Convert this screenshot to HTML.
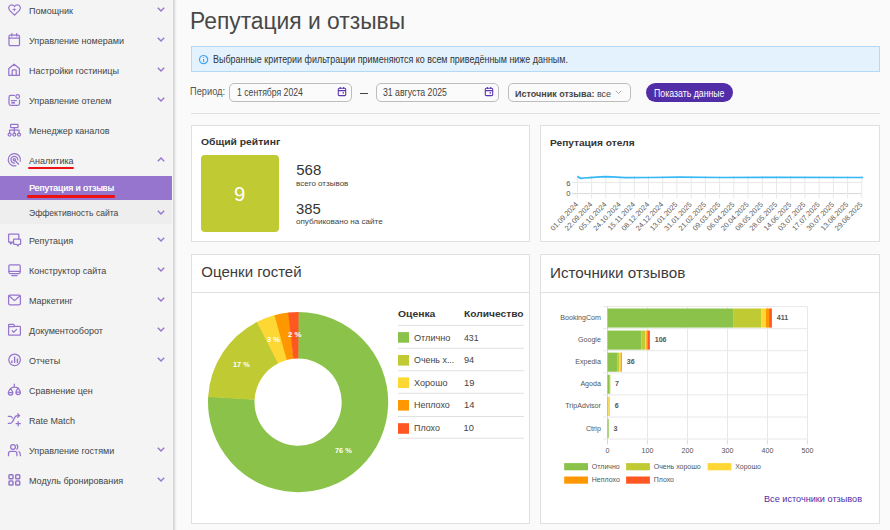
<!DOCTYPE html>
<html><head><meta charset="utf-8">
<style>
*{box-sizing:border-box;margin:0;padding:0}
html,body{width:890px;height:530px;overflow:hidden;background:#fafafa;font-family:"Liberation Sans",sans-serif;color:#333}
.abs{position:absolute}
#side{position:absolute;left:0;top:0;width:173px;height:530px;background:#f4f4f4}
#sideshadow{position:absolute;left:172px;top:0;width:5px;height:530px;background:linear-gradient(to right,#f7f7f7 0,#f7f7f7 1px,#cacaca 1px,#dedede 2.2px,#ececec 3.2px,#fafafa 5px)}
.mi{position:absolute;left:0;width:173px;height:30px;font-size:9px;color:#444}
.mi .t{position:absolute;left:29px;top:9px;line-height:12px;white-space:nowrap}
.mi svg.ic{position:absolute;left:0;top:0;width:24px;height:30px}
.mi svg.ch{position:absolute;left:157px;top:11.2px;width:8px;height:5px}
.sub{position:absolute;left:0;width:173px;height:24px;font-size:9px;color:#444}
.sub svg.ch{position:absolute;left:157px;top:9.5px;width:8px;height:5px}
.sub .t{position:absolute;left:29px;top:6px;line-height:12px;white-space:nowrap}
.card{position:absolute;background:#fff;border:1px solid #e0e0e0}
.tx{position:absolute;white-space:nowrap;line-height:1;transform-origin:0 0}
</style></head><body>
<div id="side">
<div class="mi" style="top:-4px"><svg class="ic" viewBox="0 0 24 30"><path fill="none" stroke="#9575cd" stroke-width="1.25" stroke-linecap="round" stroke-linejoin="round" d="M14.55 19.1 L9.9 14.6 C8.2 12.9 8.4 10.2 10.3 9.3 C11.8 8.6 13.4 9.1 14.55 10.4 C15.7 9.1 17.3 8.6 18.8 9.3 C20.7 10.2 20.9 12.9 19.2 14.6 Z"/><path fill="#9575cd" d="M14.1 11.3 L14.8 12.9 L16.7 13.6 L14.8 14.3 L14.5 16 L13.8 14.3 L11.9 13.6 L13.8 12.9 Z"/></svg><span class="t">Помощник</span><svg class="ch" viewBox="0 0 8 5"><path d="M0.8 0.8 L4 4 L7.2 0.8" fill="none" stroke="#9575cd" stroke-width="1.4"/></svg></div>
<div class="mi" style="top:26px"><svg class="ic" viewBox="0 0 24 30"><rect fill="none" stroke="#9575cd" stroke-width="1.25" stroke-linecap="round" stroke-linejoin="round" x="9" y="9.2" width="10.5" height="10.5" rx="1.3"/><path fill="none" stroke="#9575cd" stroke-width="1.25" stroke-linecap="round" stroke-linejoin="round" d="M9 12.2 H19.5 M11.8 7.6 V10 M16.7 7.6 V10"/></svg><span class="t">Управление номерами</span><svg class="ch" viewBox="0 0 8 5"><path d="M0.8 0.8 L4 4 L7.2 0.8" fill="none" stroke="#9575cd" stroke-width="1.4"/></svg></div>
<div class="mi" style="top:56px"><svg class="ic" viewBox="0 0 24 30"><path fill="none" stroke="#9575cd" stroke-width="1.25" stroke-linecap="round" stroke-linejoin="round" d="M8.8 19.3 V12.6 L14.1 8.2 L19.4 12.6 V19.3 Z"/><path fill="none" stroke="#9575cd" stroke-width="1.25" stroke-linecap="round" stroke-linejoin="round" d="M12.2 19.3 V14.6 Q12.2 13.8 13 13.8 H15.4 Q16.2 13.8 16.2 14.6 V19.3"/></svg><span class="t">Настройки гостиницы</span><svg class="ch" viewBox="0 0 8 5"><path d="M0.8 0.8 L4 4 L7.2 0.8" fill="none" stroke="#9575cd" stroke-width="1.4"/></svg></div>
<div class="mi" style="top:86px"><svg class="ic" viewBox="0 0 24 30"><path fill="none" stroke="#9575cd" stroke-width="1.25" stroke-linecap="round" stroke-linejoin="round" d="M14.4 9.4 H10.8 Q9 9.4 9 11.2 V17.6 Q9 19.4 10.8 19.4 H17.7 Q19.5 19.4 19.5 17.6 V14"/><circle fill="none" stroke="#9575cd" stroke-width="1.25" stroke-linecap="round" stroke-linejoin="round" cx="17.7" cy="10.5" r="1.8"/><path fill="none" stroke="#9575cd" stroke-width="1.25" stroke-linecap="round" stroke-linejoin="round" d="M11.3 14.5 H16.4"/><path fill="none" stroke="#9575cd" stroke-width="1.7" d="M11.3 16.8 H15"/></svg><span class="t">Управление отелем</span><svg class="ch" viewBox="0 0 8 5"><path d="M0.8 0.8 L4 4 L7.2 0.8" fill="none" stroke="#9575cd" stroke-width="1.4"/></svg></div>
<div class="mi" style="top:116px"><svg class="ic" viewBox="0 0 24 30"><rect fill="none" stroke="#9575cd" stroke-width="1.25" stroke-linecap="round" stroke-linejoin="round" x="10.6" y="8.3" width="7.4" height="3.3" rx="0.6"/><path fill="none" stroke="#9575cd" stroke-width="1.25" stroke-linecap="round" stroke-linejoin="round" d="M14.3 11.6 V14.2 M9.6 16.8 V14.2 H19 V16.8 M14.3 14.2 V16.8"/><circle fill="none" stroke="#9575cd" stroke-width="1.25" stroke-linecap="round" stroke-linejoin="round" cx="9.6" cy="18.5" r="1.5"/><circle fill="none" stroke="#9575cd" stroke-width="1.25" stroke-linecap="round" stroke-linejoin="round" cx="14.3" cy="18.5" r="1.5"/><circle fill="none" stroke="#9575cd" stroke-width="1.25" stroke-linecap="round" stroke-linejoin="round" cx="19" cy="18.5" r="1.5"/></svg><span class="t">Менеджер каналов</span></div>
<div class="mi" style="top:146px"><svg class="ic" viewBox="0 0 24 30"><path fill="none" stroke="#9575cd" stroke-width="1.25" stroke-linecap="round" stroke-linejoin="round" d="M15.9 19.6 A6.1 6.1 0 1 1 20.2 15.3"/><path fill="none" stroke="#9575cd" stroke-width="1.25" stroke-linecap="round" stroke-linejoin="round" d="M14.6 17.1 A3.4 3.4 0 1 1 17.7 13.9"/><circle fill="none" stroke="#9575cd" stroke-width="1.25" stroke-linecap="round" stroke-linejoin="round" cx="14.3" cy="13.7" r="1.1"/><path fill="none" stroke="#9575cd" stroke-width="1.25" stroke-linecap="round" stroke-linejoin="round" d="M15.3 14.8 L18.6 18.2"/></svg><span class="t">Аналитика</span><svg class="ch" viewBox="0 0 8 5"><path d="M0.8 4.2 L4 1 L7.2 4.2" fill="none" stroke="#9575cd" stroke-width="1.4"/></svg></div>
<div class="abs" style="left:27.5px;top:166.8px;width:46.5px;height:2.4px;background:#ee1111;border-radius:1.2px"></div>
<div class="sub" style="top:176px;background:#9575cd;color:#fafafa;"><span class="t" style="text-shadow:0.25px 0 0 #fafafa">Репутация и отзывы</span></div>
<div class="abs" style="left:27.2px;top:195.1px;width:87.7px;height:2.6px;background:#ee1111;border-radius:1.3px"></div>
<div class="sub" style="top:200px;background:#eeeeee;"><span class="t" style="font-size:8.6px;top:7px">Эффективность сайта</span><svg class="ch" viewBox="0 0 8 5"><path d="M0.8 0.8 L4 4 L7.2 0.8" fill="none" stroke="#9575cd" stroke-width="1.4"/></svg></div>
<div class="mi" style="top:226px"><svg class="ic" viewBox="0 0 24 30"><path fill="none" stroke="#9575cd" stroke-width="1.25" stroke-linecap="round" stroke-linejoin="round" d="M12.8 16.2 H9.2 Q8.6 16.2 8.6 15.6 V8.8 Q8.6 8.2 9.2 8.2 H18.2 Q18.8 8.2 18.8 8.8 V12.8 M9.8 16.2 L10.6 18 L12.4 16.2"/><path fill="none" stroke="#9575cd" stroke-width="1.25" stroke-linecap="round" stroke-linejoin="round" d="M14.2 13.2 H20 Q20.6 13.2 20.6 13.8 V17.8 Q20.6 18.4 20 18.4 H18.6 L18 20 L16.6 18.4 H14.2 Q13.6 18.4 13.6 17.8 V13.8 Q13.6 13.2 14.2 13.2 Z"/></svg><span class="t">Репутация</span><svg class="ch" viewBox="0 0 8 5"><path d="M0.8 0.8 L4 4 L7.2 0.8" fill="none" stroke="#9575cd" stroke-width="1.4"/></svg></div>
<div class="mi" style="top:256px"><svg class="ic" viewBox="0 0 24 30"><rect fill="none" stroke="#9575cd" stroke-width="1.25" stroke-linecap="round" stroke-linejoin="round" x="8.9" y="8.9" width="11.3" height="8.6" rx="1.2"/><path fill="none" stroke="#9575cd" stroke-width="1.25" stroke-linecap="round" stroke-linejoin="round" d="M9 15.4 H20.1 M11.8 19.5 H17"/></svg><span class="t">Конструктор сайта</span><svg class="ch" viewBox="0 0 8 5"><path d="M0.8 0.8 L4 4 L7.2 0.8" fill="none" stroke="#9575cd" stroke-width="1.4"/></svg></div>
<div class="mi" style="top:286px"><svg class="ic" viewBox="0 0 24 30"><rect fill="none" stroke="#9575cd" stroke-width="1.25" stroke-linecap="round" stroke-linejoin="round" x="8.6" y="9.2" width="11.8" height="9.6" rx="1.2"/><path fill="none" stroke="#9575cd" stroke-width="1.25" stroke-linecap="round" stroke-linejoin="round" d="M9 9.8 L14.5 14.6 L20 9.8"/></svg><span class="t">Маркетинг</span><svg class="ch" viewBox="0 0 8 5"><path d="M0.8 0.8 L4 4 L7.2 0.8" fill="none" stroke="#9575cd" stroke-width="1.4"/></svg></div>
<div class="mi" style="top:316px"><svg class="ic" viewBox="0 0 24 30"><path fill="none" stroke="#9575cd" stroke-width="1.25" stroke-linecap="round" stroke-linejoin="round" d="M8.6 18.4 V9 Q8.6 8.4 9.2 8.4 H13.6 L14.6 10.3 H19.8 Q20.4 10.3 20.4 10.9 V18.4 Q20.4 19 19.8 19 H9.2 Q8.6 19 8.6 18.4 Z M8.6 10.6 H14.3"/><path fill="none" stroke="#9575cd" stroke-width="1.25" stroke-linecap="round" stroke-linejoin="round" d="M12.2 14.8 L13.7 16.2 L16.6 13.4"/></svg><span class="t">Документооборот</span><svg class="ch" viewBox="0 0 8 5"><path d="M0.8 0.8 L4 4 L7.2 0.8" fill="none" stroke="#9575cd" stroke-width="1.4"/></svg></div>
<div class="mi" style="top:346px"><svg class="ic" viewBox="0 0 24 30"><circle fill="none" stroke="#9575cd" stroke-width="1.25" stroke-linecap="round" stroke-linejoin="round" cx="14.6" cy="13.8" r="5.8"/><path fill="none" stroke="#9575cd" stroke-width="1.4" d="M11.8 14.4 V17 M14.6 10.4 V17 M17.4 12.6 V17"/></svg><span class="t">Отчеты</span><svg class="ch" viewBox="0 0 8 5"><path d="M0.8 0.8 L4 4 L7.2 0.8" fill="none" stroke="#9575cd" stroke-width="1.4"/></svg></div>
<div class="mi" style="top:376px"><svg class="ic" viewBox="0 0 24 30"><path fill="none" stroke="#9575cd" stroke-width="1.25" stroke-linecap="round" stroke-linejoin="round" d="M14.3 8.2 V11 M10.5 12.5 Q14.3 10.2 18.1 12"/><path fill="none" stroke="#9575cd" stroke-width="1.25" stroke-linecap="round" stroke-linejoin="round" d="M10.5 12.6 C9.6 14 8.3 15.2 8.3 16.8 A2.25 2.25 0 0 0 12.8 16.8 C12.8 15.2 11.4 14 10.5 12.6 Z M8.6 16.6 H12.4"/><path fill="none" stroke="#9575cd" stroke-width="1.25" stroke-linecap="round" stroke-linejoin="round" d="M18.1 12.1 C17.2 13.5 15.9 14.7 15.9 16.3 A2.25 2.25 0 0 0 20.4 16.3 C20.4 14.7 19 13.5 18.1 12.1 Z M16.2 16.1 H20"/></svg><span class="t">Сравнение цен</span></div>
<div class="mi" style="top:406px"><svg class="ic" viewBox="0 0 24 30"><path fill="none" stroke="#9575cd" stroke-width="1.25" stroke-linecap="round" stroke-linejoin="round" d="M8.3 10.4 H10.3 Q11.6 10.4 12.4 12"/><path fill="none" stroke="#9575cd" stroke-width="1.25" stroke-linecap="round" stroke-linejoin="round" d="M8.3 17.3 H10.4 Q11.8 17.3 12.6 15.6 L14.6 11.6 Q15.6 9.6 17.6 9.6 H19.4 M17.6 7.8 L19.6 9.6 L17.6 11.4"/><path fill="none" stroke="#9575cd" stroke-width="1.25" stroke-linecap="round" stroke-linejoin="round" d="M18.2 15.6 V19.8 M16.1 17.7 H20.3"/></svg><span class="t">Rate Match</span></div>
<div class="mi" style="top:436px"><svg class="ic" viewBox="0 0 24 30"><circle fill="none" stroke="#9575cd" stroke-width="1.25" stroke-linecap="round" stroke-linejoin="round" cx="13" cy="10.9" r="2.4"/><path fill="none" stroke="#9575cd" stroke-width="1.25" stroke-linecap="round" stroke-linejoin="round" d="M8.5 19.7 V17.4 Q8.5 15.3 10.6 15.3 H14.8 Q16.9 15.3 16.9 17.4 V19.7"/><path fill="none" stroke="#9575cd" stroke-width="1.25" stroke-linecap="round" stroke-linejoin="round" d="M16.9 8.6 Q18.7 10.9 16.9 13.3 M19 15.4 Q20.4 16.4 20.4 19.7"/></svg><span class="t">Управление гостями</span><svg class="ch" viewBox="0 0 8 5"><path d="M0.8 0.8 L4 4 L7.2 0.8" fill="none" stroke="#9575cd" stroke-width="1.4"/></svg></div>
<div class="mi" style="top:466px"><svg class="ic" viewBox="0 0 24 30"><rect fill="none" stroke="#9575cd" stroke-width="1.5" x="9" y="8.7" width="4" height="4" rx="0.8"/><rect fill="none" stroke="#9575cd" stroke-width="1.5" x="15.7" y="8.7" width="4" height="4" rx="0.8"/><rect fill="none" stroke="#9575cd" stroke-width="1.5" x="9" y="15.1" width="4" height="4" rx="0.8"/><rect fill="none" stroke="#9575cd" stroke-width="1.5" x="15.7" y="15.1" width="4" height="4" rx="0.8"/></svg><span class="t">Модуль бронирования</span><svg class="ch" viewBox="0 0 8 5"><path d="M0.8 0.8 L4 4 L7.2 0.8" fill="none" stroke="#9575cd" stroke-width="1.4"/></svg></div>
</div>
<div id="sideshadow"></div>
<div class="abs" style="left:191px;top:46px;width:689px;height:26px;background:#e3f2fd;border:1px solid #b3d9f5"></div>
<svg class="abs" style="left:198px;top:54px;width:12px;height:12px" viewBox="0 0 12 12"><circle cx="5.6" cy="5.6" r="4.1" fill="none" stroke="#42a5f5" stroke-width="1.2"/><path d="M5.6 4.9 V8" stroke="#42a5f5" stroke-width="1.1"/><circle cx="5.6" cy="3.5" r="0.6" fill="#42a5f5"/></svg>
<div class="abs" style="left:229px;top:83px;width:123px;height:19px;border:1px solid #bdbdbd;border-radius:5px;background:#fbfbfb"></div>
<svg class="abs" style="left:337px;top:86px;width:10px;height:11px" viewBox="0 0 10 11" fill="none" stroke="#5e35b1" stroke-width="1.1"><rect x="1.3" y="2.2" width="7.4" height="7.4" rx="1.1"/><path d="M1.3 4.6 H8.7 M3.3 1 V3 M6.7 1 V3"/><rect x="5.6" y="6.2" width="1.4" height="1.4" fill="#5e35b1" stroke="none"/></svg>
<div class="abs" style="left:360px;top:92.5px;width:8px;height:1px;background:#444"></div>
<div class="abs" style="left:376px;top:83px;width:123px;height:19px;border:1px solid #bdbdbd;border-radius:5px;background:#fbfbfb"></div>
<svg class="abs" style="left:484px;top:86px;width:10px;height:11px" viewBox="0 0 10 11" fill="none" stroke="#5e35b1" stroke-width="1.1"><rect x="1.3" y="2.2" width="7.4" height="7.4" rx="1.1"/><path d="M1.3 4.6 H8.7 M3.3 1 V3 M6.7 1 V3"/><rect x="5.6" y="6.2" width="1.4" height="1.4" fill="#5e35b1" stroke="none"/></svg>
<div class="abs" style="left:508px;top:83px;width:123px;height:19px;border:1px solid #bdbdbd;border-radius:5px;background:#fbfbfb"></div>
<svg class="abs" style="left:615px;top:90px;width:7px;height:5px" viewBox="0 0 7 5"><path d="M0.8 0.8 L3.5 3.5 L6.2 0.8" fill="none" stroke="#9e9e9e" stroke-width="0.9"/></svg>
<div class="abs" style="left:646px;top:83px;width:87px;height:19px;background:#512da8;border-radius:10px"></div>
<div class="abs" style="left:191px;top:113px;width:689px;height:1px;background:#e0e0e0"></div>
<div class="card" style="left:191px;top:125px;width:339px;height:117px"></div>
<div class="abs" style="left:201px;top:155px;width:78px;height:77px;background:#c0ca33;border-radius:4px"></div>
<div class="card" style="left:540px;top:125px;width:340px;height:117px"></div>
<svg class="abs" style="left:540px;top:150px;width:340px;height:90px" viewBox="540 150 340 90"><line x1="572" y1="182.6" x2="861.8" y2="182.6" stroke="#e8e8e8" stroke-width="1"/><line x1="572" y1="193.6" x2="861.8" y2="193.6" stroke="#d8d8d8" stroke-width="1"/><line x1="577.4" y1="176" x2="577.4" y2="198.5" stroke="#e8e8e8" stroke-width="1"/><text x="578.6" y="204.8" transform="rotate(-46.5 578.6 204.8)" text-anchor="end" font-size="7.3" fill="#606060" font-family="Liberation Sans">01.09.2024</text><line x1="591.6" y1="176" x2="591.6" y2="198.5" stroke="#e8e8e8" stroke-width="1"/><text x="592.8" y="204.8" transform="rotate(-46.5 592.8 204.8)" text-anchor="end" font-size="7.3" fill="#606060" font-family="Liberation Sans">22.09.2024</text><line x1="605.8" y1="176" x2="605.8" y2="198.5" stroke="#e8e8e8" stroke-width="1"/><text x="607.0" y="204.8" transform="rotate(-46.5 607.0 204.8)" text-anchor="end" font-size="7.3" fill="#606060" font-family="Liberation Sans">05.10.2024</text><line x1="620.1" y1="176" x2="620.1" y2="198.5" stroke="#e8e8e8" stroke-width="1"/><text x="621.3" y="204.8" transform="rotate(-46.5 621.3 204.8)" text-anchor="end" font-size="7.3" fill="#606060" font-family="Liberation Sans">24.10.2024</text><line x1="634.3" y1="176" x2="634.3" y2="198.5" stroke="#e8e8e8" stroke-width="1"/><text x="635.5" y="204.8" transform="rotate(-46.5 635.5 204.8)" text-anchor="end" font-size="7.3" fill="#606060" font-family="Liberation Sans">15.11.2024</text><line x1="648.5" y1="176" x2="648.5" y2="198.5" stroke="#e8e8e8" stroke-width="1"/><text x="649.7" y="204.8" transform="rotate(-46.5 649.7 204.8)" text-anchor="end" font-size="7.3" fill="#606060" font-family="Liberation Sans">08.12.2024</text><line x1="662.7" y1="176" x2="662.7" y2="198.5" stroke="#e8e8e8" stroke-width="1"/><text x="663.9" y="204.8" transform="rotate(-46.5 663.9 204.8)" text-anchor="end" font-size="7.3" fill="#606060" font-family="Liberation Sans">24.12.2024</text><line x1="676.9" y1="176" x2="676.9" y2="198.5" stroke="#e8e8e8" stroke-width="1"/><text x="678.1" y="204.8" transform="rotate(-46.5 678.1 204.8)" text-anchor="end" font-size="7.3" fill="#606060" font-family="Liberation Sans">13.01.2025</text><line x1="691.2" y1="176" x2="691.2" y2="198.5" stroke="#e8e8e8" stroke-width="1"/><text x="692.4" y="204.8" transform="rotate(-46.5 692.4 204.8)" text-anchor="end" font-size="7.3" fill="#606060" font-family="Liberation Sans">31.01.2025</text><line x1="705.4" y1="176" x2="705.4" y2="198.5" stroke="#e8e8e8" stroke-width="1"/><text x="706.6" y="204.8" transform="rotate(-46.5 706.6 204.8)" text-anchor="end" font-size="7.3" fill="#606060" font-family="Liberation Sans">21.02.2025</text><line x1="719.6" y1="176" x2="719.6" y2="198.5" stroke="#e8e8e8" stroke-width="1"/><text x="720.8" y="204.8" transform="rotate(-46.5 720.8 204.8)" text-anchor="end" font-size="7.3" fill="#606060" font-family="Liberation Sans">09.03.2025</text><line x1="733.8" y1="176" x2="733.8" y2="198.5" stroke="#e8e8e8" stroke-width="1"/><text x="735.0" y="204.8" transform="rotate(-46.5 735.0 204.8)" text-anchor="end" font-size="7.3" fill="#606060" font-family="Liberation Sans">06.04.2025</text><line x1="748.0" y1="176" x2="748.0" y2="198.5" stroke="#e8e8e8" stroke-width="1"/><text x="749.2" y="204.8" transform="rotate(-46.5 749.2 204.8)" text-anchor="end" font-size="7.3" fill="#606060" font-family="Liberation Sans">20.04.2025</text><line x1="762.3" y1="176" x2="762.3" y2="198.5" stroke="#e8e8e8" stroke-width="1"/><text x="763.5" y="204.8" transform="rotate(-46.5 763.5 204.8)" text-anchor="end" font-size="7.3" fill="#606060" font-family="Liberation Sans">08.05.2025</text><line x1="776.5" y1="176" x2="776.5" y2="198.5" stroke="#e8e8e8" stroke-width="1"/><text x="777.7" y="204.8" transform="rotate(-46.5 777.7 204.8)" text-anchor="end" font-size="7.3" fill="#606060" font-family="Liberation Sans">28.05.2025</text><line x1="790.7" y1="176" x2="790.7" y2="198.5" stroke="#e8e8e8" stroke-width="1"/><text x="791.9" y="204.8" transform="rotate(-46.5 791.9 204.8)" text-anchor="end" font-size="7.3" fill="#606060" font-family="Liberation Sans">14.06.2025</text><line x1="804.9" y1="176" x2="804.9" y2="198.5" stroke="#e8e8e8" stroke-width="1"/><text x="806.1" y="204.8" transform="rotate(-46.5 806.1 204.8)" text-anchor="end" font-size="7.3" fill="#606060" font-family="Liberation Sans">03.07.2025</text><line x1="819.1" y1="176" x2="819.1" y2="198.5" stroke="#e8e8e8" stroke-width="1"/><text x="820.3" y="204.8" transform="rotate(-46.5 820.3 204.8)" text-anchor="end" font-size="7.3" fill="#606060" font-family="Liberation Sans">17.07.2025</text><line x1="833.4" y1="176" x2="833.4" y2="198.5" stroke="#e8e8e8" stroke-width="1"/><text x="834.6" y="204.8" transform="rotate(-46.5 834.6 204.8)" text-anchor="end" font-size="7.3" fill="#606060" font-family="Liberation Sans">30.07.2025</text><line x1="847.6" y1="176" x2="847.6" y2="198.5" stroke="#e8e8e8" stroke-width="1"/><text x="848.8" y="204.8" transform="rotate(-46.5 848.8 204.8)" text-anchor="end" font-size="7.3" fill="#606060" font-family="Liberation Sans">13.08.2025</text><line x1="861.8" y1="176" x2="861.8" y2="198.5" stroke="#e8e8e8" stroke-width="1"/><text x="863.0" y="204.8" transform="rotate(-46.5 863.0 204.8)" text-anchor="end" font-size="7.3" fill="#606060" font-family="Liberation Sans">29.08.2025</text><text x="570.4" y="185.5" text-anchor="end" font-size="7.6" fill="#4a4a4a" font-family="Liberation Sans">6</text><text x="570.4" y="196" text-anchor="end" font-size="7.6" fill="#4a4a4a" font-family="Liberation Sans">0</text><path d="M577.5 176.0 L579.0 177.6 L581.0 178.4 L584.0 178.0 L590.0 177.6 L600.0 176.9 L606.0 176.6 L612.0 176.9 L625.0 177.7 L650.0 177.5 L680.0 177.2 L720.0 177.5 L780.0 177.4 L863.2 177.5" fill="none" stroke="#35b8f5" stroke-width="1.7" stroke-linejoin="round"/></svg>
<div class="card" style="left:191px;top:254px;width:339px;height:270px"></div>
<div class="abs" style="left:192px;top:292px;width:337px;height:1px;background:#e0e0e0"></div>
<svg class="abs" style="left:192px;top:293px;width:336px;height:230px" viewBox="192 293 336 230"><path d="M298.10 312.00 A90.1 90.1 0 1 1 208.17 396.58 L254.58 399.43 A43.6 43.6 0 1 0 298.10 358.50 Z" fill="#8bc34a"/><path d="M208.14 397.12 A90.1 90.1 0 0 1 257.32 321.76 L278.37 363.22 A43.6 43.6 0 0 0 254.57 399.69 Z" fill="#c0ca33"/><path d="M256.84 322.00 A90.1 90.1 0 0 1 274.98 315.02 L286.91 359.96 A43.6 43.6 0 0 0 278.13 363.34 Z" fill="#fdd835"/><path d="M274.46 315.16 A90.1 90.1 0 0 1 288.69 312.49 L293.55 358.74 A43.6 43.6 0 0 0 286.66 360.03 Z" fill="#ff9800"/><path d="M288.15 312.55 A90.1 90.1 0 0 1 298.64 312.00 L298.36 358.50 A43.6 43.6 0 0 0 293.29 358.77 Z" fill="#ff5722"/><line x1="398" y1="325.4" x2="523.7" y2="325.4" stroke="#e0e0e0" stroke-width="1"/><line x1="398" y1="348.3" x2="523.7" y2="348.3" stroke="#e0e0e0" stroke-width="1"/><line x1="398" y1="370.75" x2="523.7" y2="370.75" stroke="#e0e0e0" stroke-width="1"/><line x1="398" y1="393.3" x2="523.7" y2="393.3" stroke="#e0e0e0" stroke-width="1"/><line x1="398" y1="416.5" x2="523.7" y2="416.5" stroke="#e0e0e0" stroke-width="1"/><line x1="398" y1="438.2" x2="523.7" y2="438.2" stroke="#e0e0e0" stroke-width="1"/><rect x="398" y="332.1" width="11" height="10.6" fill="#8bc34a"/><rect x="398" y="355.0" width="11" height="10.6" fill="#c0ca33"/><rect x="398" y="377.4" width="11" height="10.6" fill="#fdd835"/><rect x="398" y="400.0" width="11" height="10.6" fill="#ff9800"/><rect x="398" y="423.2" width="11" height="10.6" fill="#ff5722"/></svg>
<div class="card" style="left:540px;top:254px;width:340px;height:270px"></div>
<div class="abs" style="left:541px;top:292px;width:338px;height:1px;background:#e0e0e0"></div>
<svg class="abs" style="left:541px;top:293px;width:338px;height:230px" viewBox="541 293 338 230"><line x1="647.5" y1="306.6" x2="647.5" y2="440" stroke="#e8e8e8" stroke-width="1"/><line x1="687.5" y1="306.6" x2="687.5" y2="440" stroke="#e8e8e8" stroke-width="1"/><line x1="727.5" y1="306.6" x2="727.5" y2="440" stroke="#e8e8e8" stroke-width="1"/><line x1="767.5" y1="306.6" x2="767.5" y2="440" stroke="#e8e8e8" stroke-width="1"/><line x1="807.5" y1="306.6" x2="807.5" y2="440" stroke="#e8e8e8" stroke-width="1"/><line x1="603.0" y1="306.6" x2="807.5" y2="306.6" stroke="#e8e8e8" stroke-width="1"/><line x1="603.0" y1="328.7" x2="807.5" y2="328.7" stroke="#e8e8e8" stroke-width="1"/><line x1="603.0" y1="350.7" x2="807.5" y2="350.7" stroke="#e8e8e8" stroke-width="1"/><line x1="603.0" y1="372.8" x2="807.5" y2="372.8" stroke="#e8e8e8" stroke-width="1"/><line x1="603.0" y1="394.9" x2="807.5" y2="394.9" stroke="#e8e8e8" stroke-width="1"/><line x1="603.0" y1="417.0" x2="807.5" y2="417.0" stroke="#e8e8e8" stroke-width="1"/><line x1="603.0" y1="439.0" x2="807.5" y2="439.0" stroke="#e8e8e8" stroke-width="1"/><line x1="607.5" y1="306.6" x2="607.5" y2="444.5" stroke="#d8d8d8" stroke-width="1"/><line x1="647.5" y1="440" x2="647.5" y2="444.5" stroke="#e0e0e0" stroke-width="1"/><line x1="687.5" y1="440" x2="687.5" y2="444.5" stroke="#e0e0e0" stroke-width="1"/><line x1="727.5" y1="440" x2="727.5" y2="444.5" stroke="#e0e0e0" stroke-width="1"/><line x1="767.5" y1="440" x2="767.5" y2="444.5" stroke="#e0e0e0" stroke-width="1"/><line x1="807.5" y1="440" x2="807.5" y2="444.5" stroke="#e0e0e0" stroke-width="1"/><rect x="607.50" y="308.50" width="125.60" height="19.07" fill="#8bc34a"/><rect x="733.10" y="308.50" width="28.40" height="19.07" fill="#c0ca33"/><rect x="761.50" y="308.50" width="4.40" height="19.07" fill="#fdd835"/><rect x="765.90" y="308.50" width="3.20" height="19.07" fill="#ff9800"/><rect x="769.10" y="308.50" width="2.80" height="19.07" fill="#ff5722"/><text x="600.9" y="320.1" text-anchor="end" font-size="7.1" fill="#555" font-family="Liberation Sans">BookingCom</text><text x="776.7" y="320.1" font-size="7.1" font-weight="bold" fill="#555" font-family="Liberation Sans">411</text><rect x="607.50" y="330.57" width="34.00" height="19.07" fill="#8bc34a"/><rect x="641.50" y="330.57" width="3.60" height="19.07" fill="#c0ca33"/><rect x="645.10" y="330.57" width="1.20" height="19.07" fill="#fdd835"/><rect x="646.30" y="330.57" width="1.20" height="19.07" fill="#ff9800"/><rect x="647.50" y="330.57" width="2.40" height="19.07" fill="#ff5722"/><text x="600.9" y="342.2" text-anchor="end" font-size="7.1" fill="#555" font-family="Liberation Sans">Google</text><text x="654.7" y="342.2" font-size="7.1" font-weight="bold" fill="#555" font-family="Liberation Sans">106</text><rect x="607.50" y="352.64" width="9.60" height="19.07" fill="#8bc34a"/><rect x="617.10" y="352.64" width="2.00" height="19.07" fill="#c0ca33"/><rect x="619.10" y="352.64" width="1.60" height="19.07" fill="#fdd835"/><rect x="620.70" y="352.64" width="1.20" height="19.07" fill="#ff9800"/><text x="600.9" y="364.2" text-anchor="end" font-size="7.1" fill="#555" font-family="Liberation Sans">Expedia</text><text x="626.7" y="364.2" font-size="7.1" font-weight="bold" fill="#555" font-family="Liberation Sans">36</text><rect x="607.50" y="374.71" width="1.60" height="19.07" fill="#8bc34a"/><rect x="609.10" y="374.71" width="1.20" height="19.07" fill="#c0ca33"/><text x="600.9" y="386.3" text-anchor="end" font-size="7.1" fill="#555" font-family="Liberation Sans">Agoda</text><text x="615.1" y="386.3" font-size="7.1" font-weight="bold" fill="#555" font-family="Liberation Sans">7</text><rect x="607.50" y="396.78" width="0.80" height="19.07" fill="#8bc34a"/><rect x="608.30" y="396.78" width="1.60" height="19.07" fill="#fdd835"/><text x="600.9" y="408.4" text-anchor="end" font-size="7.1" fill="#555" font-family="Liberation Sans">TripAdvisor</text><text x="614.7" y="408.4" font-size="7.1" font-weight="bold" fill="#555" font-family="Liberation Sans">6</text><rect x="607.50" y="418.85" width="1.20" height="19.07" fill="#8bc34a"/><text x="600.9" y="430.5" text-anchor="end" font-size="7.1" fill="#555" font-family="Liberation Sans">Ctrip</text><text x="613.5" y="430.5" font-size="7.1" font-weight="bold" fill="#555" font-family="Liberation Sans">3</text><text x="607.5" y="452.8" text-anchor="middle" font-size="7.1" fill="#555" font-family="Liberation Sans">0</text><text x="647.5" y="452.8" text-anchor="middle" font-size="7.1" fill="#555" font-family="Liberation Sans">100</text><text x="687.5" y="452.8" text-anchor="middle" font-size="7.1" fill="#555" font-family="Liberation Sans">200</text><text x="727.5" y="452.8" text-anchor="middle" font-size="7.1" fill="#555" font-family="Liberation Sans">300</text><text x="767.5" y="452.8" text-anchor="middle" font-size="7.1" fill="#555" font-family="Liberation Sans">400</text><text x="807.5" y="452.8" text-anchor="middle" font-size="7.1" fill="#555" font-family="Liberation Sans">500</text><rect x="564.2" y="463.1" width="23.8" height="7.2" fill="#8bc34a"/><text x="591.8000000000001" y="469.0" font-size="7" fill="#555" font-family="Liberation Sans">Отлично</text><rect x="626.1" y="463.1" width="23.8" height="7.2" fill="#c0ca33"/><text x="653.7" y="469.0" font-size="7" fill="#555" font-family="Liberation Sans">Очень хорошо</text><rect x="707.6" y="463.1" width="23.8" height="7.2" fill="#fdd835"/><text x="735.2" y="469.0" font-size="7" fill="#555" font-family="Liberation Sans">Хорошо</text><rect x="564.2" y="476.5" width="23.8" height="7.2" fill="#ff9800"/><text x="591.8000000000001" y="482.4" font-size="7" fill="#555" font-family="Liberation Sans">Неплохо</text><rect x="626.1" y="476.5" width="23.8" height="7.2" fill="#ff5722"/><text x="653.7" y="482.4" font-size="7" fill="#555" font-family="Liberation Sans">Плохо</text></svg>
<div class="tx" style="left:190.30px;top:10.01px;font-size:23.5px;color:#484848;transform:scaleX(0.9706);">Репутация и отзывы</div>
<div class="tx" style="left:212.99px;top:55.23px;font-size:10.0px;color:#333;transform:scaleX(0.8946);">Выбранные критерии фильтрации применяются ко всем приведённым ниже данным.</div>
<div class="tx" style="left:190.09px;top:87.33px;font-size:10.0px;color:#555;transform:scaleX(0.9263);">Период:</div>
<div class="tx" style="left:237.30px;top:88.10px;font-size:10.4px;color:#444;transform:scaleX(0.8341);">1 сентября 2024</div>
<div class="tx" style="left:383.47px;top:88.10px;font-size:10.4px;color:#444;transform:scaleX(0.8392);">31 августа 2025</div>
<div class="tx" style="left:515.36px;top:90.27px;font-size:8.9px;color:#444;transform:scaleX(1.0128);"><b>Источник отзыва:</b> все</div>
<div class="tx" style="left:654.33px;top:89.44px;font-size:10.0px;color:#fff;transform:scaleX(0.8759);">Показать данные</div>
<div class="tx" style="left:200.58px;top:136.52px;font-size:9.6px;font-weight:bold;color:#333;transform:scaleX(1.0789);">Общий рейтинг</div>
<div class="tx" style="left:233.62px;top:185.11px;font-size:19.6px;color:#fff;transform:scaleX(1.0325);">9</div>
<div class="tx" style="left:296.27px;top:162.20px;font-size:15.0px;color:#333;">568</div>
<div class="tx" style="left:296.45px;top:179.51px;font-size:7.2px;color:#444;transform:scaleX(1.1158);">всего отзывов</div>
<div class="tx" style="left:295.96px;top:202.31px;font-size:14.4px;color:#333;transform:scaleX(1.0284);">385</div>
<div class="tx" style="left:296.13px;top:218.17px;font-size:7.6px;color:#444;transform:scaleX(1.0611);">опубликовано на сайте</div>
<div class="tx" style="left:549.90px;top:137.76px;font-size:9.5px;font-weight:bold;color:#333;transform:scaleX(1.0662);">Репутация отеля</div>
<div class="tx" style="left:201.37px;top:263.80px;font-size:15.0px;color:#3c3c3c;">Оценки гостей</div>
<div class="tx" style="left:550.46px;top:266.04px;font-size:14.6px;color:#3c3c3c;transform:scaleX(1.0436);">Источники отзывов</div>
<div class="tx" style="left:397.78px;top:310.13px;font-size:9.3px;font-weight:bold;color:#333;transform:scaleX(1.1117);">Оценка</div>
<div class="tx" style="left:463.58px;top:310.13px;font-size:9.3px;font-weight:bold;color:#333;transform:scaleX(1.0995);">Количество</div>
<div class="tx" style="left:764.13px;top:494.60px;font-size:8.5px;color:#512da8;transform:scaleX(1.0754);">Все источники отзывов</div>
<div class="tx" style="left:413.93px;top:334.03px;font-size:9.3px;color:#444;transform:scaleX(0.9816);">Отлично</div>
<div class="tx" style="left:463.83px;top:334.03px;font-size:9.3px;color:#444;transform:scaleX(0.9371);">431</div>
<div class="tx" style="left:413.95px;top:356.33px;font-size:9.3px;color:#444;transform:scaleX(0.9547);">Очень х...</div>
<div class="tx" style="left:463.73px;top:356.33px;font-size:9.3px;color:#444;transform:scaleX(0.9840);">94</div>
<div class="tx" style="left:413.89px;top:379.03px;font-size:9.3px;color:#444;transform:scaleX(0.9784);">Хорошо</div>
<div class="tx" style="left:463.52px;top:379.03px;font-size:9.3px;color:#444;transform:scaleX(1.0042);">19</div>
<div class="tx" style="left:413.76px;top:401.33px;font-size:9.3px;color:#444;transform:scaleX(0.9617);">Неплохо</div>
<div class="tx" style="left:463.52px;top:401.33px;font-size:9.3px;color:#444;transform:scaleX(1.0055);">14</div>
<div class="tx" style="left:413.78px;top:424.03px;font-size:9.3px;color:#444;transform:scaleX(0.9585);">Плохо</div>
<div class="tx" style="left:463.52px;top:424.03px;font-size:9.3px;color:#444;">10</div>
<div class="tx" style="left:335.18px;top:447.17px;font-size:7.6px;font-weight:bold;color:#fff;transform:scaleX(0.9734);">76 %</div>
<div class="tx" style="left:233.16px;top:361.17px;font-size:7.6px;font-weight:bold;color:#fff;transform:scaleX(0.9747);">17 %</div>
<div class="tx" style="left:267.46px;top:336.27px;font-size:7.6px;font-weight:bold;color:#fff;transform:scaleX(0.9782);">3 %</div>
<div class="tx" style="left:287.73px;top:331.27px;font-size:7.6px;font-weight:bold;color:#fff;transform:scaleX(1.0275);">2 %</div>
</body></html>
